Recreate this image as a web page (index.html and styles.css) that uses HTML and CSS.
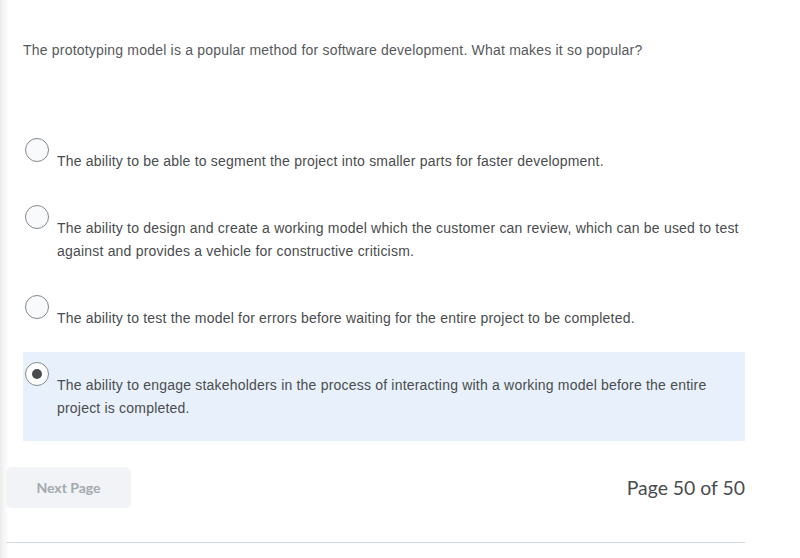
FILE: index.html
```html
<!DOCTYPE html>
<html>
<head>
<meta charset="utf-8">
<link rel="stylesheet" href="styles.css">
</head>
<body>
<div class="page">
  <div class="quiz">
    <p class="question">The prototyping model is a popular method for software development. What makes it so popular?</p>
    <div class="options">
      <label class="option">
        <span class="radio"></span>
        <span class="text">The ability to be able to segment the project into smaller parts for faster development.</span>
      </label>
      <label class="option">
        <span class="radio"></span>
        <span class="text">The ability to design and create a working model which the customer can review, which can be used to test against and provides a vehicle for constructive criticism.</span>
      </label>
      <label class="option">
        <span class="radio"></span>
        <span class="text">The ability to test the model for errors before waiting for the entire project to be completed.</span>
      </label>
      <label class="option selected">
        <span class="radio checked"></span>
        <span class="text">The ability to engage stakeholders in the process of interacting with a working model before the entire project is completed.</span>
      </label>
    </div>
  </div>
  <div class="footer">
    <button class="next">Next Page</button>
    <span class="pageno">Page 50 of 50</span>
  </div>
  <div class="rule"></div>
</div>
</body>
</html>
```

FILE: styles.css
```css
html, body {
  margin: 0;
  padding: 0;
  background: #fff;
}
body {
  width: 800px;
  height: 558px;
  overflow: hidden;
  background: linear-gradient(to right, #ebebeb 0px, #f6f6f6 4px, #ffffff 9px);
  font-family: "Liberation Sans", Arial, sans-serif;
}
.page {
  padding-left: 6px;
  width: 739px;
}
.quiz {
  padding-left: 17px;
}
.question {
  margin: 0;
  padding-top: 40px;
  font-size: 14px;
  letter-spacing: 0.2px;
  line-height: 20px;
  color: #56595c;
}
.options {
  margin-top: 68px;
  display: flex;
  flex-direction: column;
  gap: 1px;
}
.option {
  display: flex;
  align-items: flex-start;
  padding: 10px 0 21px 2px;
}
.option.selected {
  background: #e8f1fb;
}
.radio {
  flex: none;
  width: 22px;
  height: 22px;
  border: 1px solid #84898d;
  border-radius: 50%;
  background: #f9fafc;
  margin-right: 8px;
  display: flex;
  align-items: center;
  justify-content: center;
}
.radio.checked {
  background: #ffffff;
}
.radio.checked::after {
  content: "";
  width: 10px;
  height: 10px;
  border-radius: 50%;
  background: #494c4e;
}
.text {
  margin-top: 12px;
  font-size: 14px;
  letter-spacing: 0.2px;
  line-height: 23px;
  color: #494c4e;
}
.footer {
  margin-top: 26px;
  display: flex;
  justify-content: space-between;
  align-items: center;
}
.next {
  width: 125px;
  height: 41px;
  border: none;
  border-radius: 6px;
  background: #f1f3f6;
  font-family: Lato, sans-serif;
  font-weight: 700;
  font-size: 14px;
  color: #a3a9ae;
  padding: 0;
}
.pageno {
  font-family: Lato, sans-serif;
  font-size: 19.4px;
  color: #494c4e;
}
.rule {
  margin-top: 34px;
  height: 1px;
  background: #d3d9e3;
}
```
